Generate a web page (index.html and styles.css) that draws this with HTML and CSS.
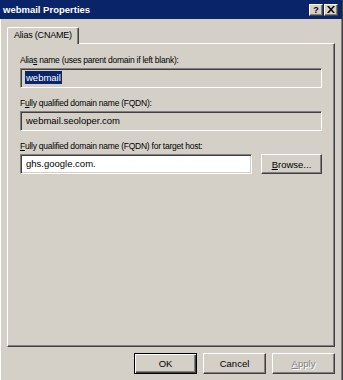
FILE: index.html
```html
<!DOCTYPE html>
<html lang="en">
<head>
    <meta charset="UTF-8">
    <title>webmail Properties</title>
    <link rel="stylesheet" href="styles.css">
</head>
<body>
    <div class="window">
        <div class="titlebar">
            <span class="title">webmail Properties</span>
            <div class="caption-buttons">
                <span class="cap-btn help">?</span>
                <span class="cap-btn">
                    <svg width="8" height="7" viewBox="0 0 8 7">
                        <path d="M0 0h2l2 2.5L6 0h2L5 3.5 8 7H6L4 4.5 2 7H0l3-3.5z" fill="#000"/>
                    </svg>
                </span>
            </div>
        </div>

        <div class="dialog-body">
            <div class="tabs">
                <div class="tab active">Alias (CNAME)</div>
            </div>

            <div class="panel">
                <div class="field">
                    <label>Alia<u>s</u> name (uses parent domain if left blank):</label>
                    <div class="textbox readonly"><span class="selected">webmail</span></div>
                </div>

                <div class="field">
                    <label>F<u>u</u>lly qualified domain name (FQDN):</label>
                    <div class="textbox readonly">webmail.seoloper.com</div>
                </div>

                <div class="field">
                    <label><u>F</u>ully qualified domain name (FQDN) for target host:</label>
                    <div class="input-row">
                        <div class="textbox">ghs.google.com.</div>
                        <button type="button" class="btn browse"><u>B</u>rowse...</button>
                    </div>
                </div>
            </div>

            <div class="actions">
                <button type="button" class="btn default">OK</button>
                <button type="button" class="btn">Cancel</button>
                <button type="button" class="btn" disabled><u>A</u>pply</button>
            </div>
        </div>
    </div>
</body>
</html>
```

FILE: styles.css
```css
* {
    margin: 0;
    padding: 0;
    box-sizing: border-box;
    font-family: 'Liberation Sans', Arial, sans-serif;
}

body {
    background: #d4d0c8;
    width: 343px;
    height: 380px;
    overflow: hidden;
}

.window {
    width: 343px;
    height: 380px;
    background: #d4d0c8;
    border-right: 1px solid #404040;
    box-shadow: inset -1px 0 #808080, inset 1px 0 #ffffff;
}

.titlebar {
    height: 19px;
    background: #0a246a;
    display: flex;
    align-items: center;
    justify-content: space-between;
    padding: 0 4px 0 3px;
}

.title {
    color: #fff;
    font-weight: bold;
    font-size: 9.5px;
}

.caption-buttons {
    display: flex;
    gap: 1px;
}

.cap-btn {
    width: 14px;
    height: 12px;
    display: flex;
    align-items: center;
    justify-content: center;
    background: #d4d0c8;
    border-top: 1px solid #fff;
    border-left: 1px solid #fff;
    border-right: 1px solid #404040;
    border-bottom: 1px solid #404040;
    box-shadow: inset -1px -1px #808080;
}

.cap-btn.help {
    font-weight: bold;
    font-size: 9px;
    color: #000;
}

.dialog-body {
    padding: 8px 7px 0 7px;
}

.tabs {
    display: flex;
    position: relative;
    z-index: 1;
    margin-bottom: -1px;
}

.tab {
    height: 17px;
    padding: 0 6px;
    font-size: 9px;
    letter-spacing: -0.2px;
    line-height: 15px;
    background: #d4d0c8;
    border-top: 1px solid #fff;
    border-left: 1px solid #fff;
    border-right: 1px solid #404040;
    border-radius: 2px 2px 0 0;
    box-shadow: inset -1px 0 #808080;
}

.panel {
    height: 304px;
    padding: 10px 12px 0 12px;
    border-top: 1px solid #fff;
    border-left: 1px solid #fff;
    border-right: 1px solid #404040;
    border-bottom: 1px solid #404040;
    box-shadow: inset -1px -1px #808080;
}

.field {
    margin-bottom: 9px;
}

label {
    display: block;
    font-size: 8.5px;
    letter-spacing: -0.25px;
    line-height: 12px;
    margin-bottom: 2px;
    color: #000;
}

.textbox {
    height: 20px;
    padding: 1px 5px 0 5px;
    font-size: 9.5px;
    line-height: 16px;
    background: #fff;
    border-top: 1px solid #808080;
    border-left: 1px solid #808080;
    border-right: 1px solid #fff;
    border-bottom: 1px solid #fff;
    box-shadow: inset 1px 1px #404040, inset -1px -1px #d4d0c8;
}

.textbox.readonly {
    background: #d4d0c8;
}

.selected {
    background: #0a246a;
    color: #fff;
    padding: 1px 1px;
    margin-left: -1px;
}

.input-row {
    display: flex;
    gap: 9px;
}

.input-row .textbox {
    flex: 1;
}

.btn {
    width: 63px;
    height: 21px;
    font-size: 9.5px;
    color: #000;
    background: #d4d0c8;
    border-top: 1px solid #fff;
    border-left: 1px solid #fff;
    border-right: 1px solid #404040;
    border-bottom: 1px solid #404040;
    box-shadow: inset -1px -1px #808080;
}

.btn.browse {
    width: 61px;
    height: 20px;
}

.btn.default {
    border: 1px solid #000;
    box-shadow: inset 1px 1px #fff, inset -1px -1px #404040, inset -2px -2px #808080;
}

.btn:disabled {
    color: #808080;
    text-shadow: 1px 1px #fff;
}

.actions {
    display: flex;
    justify-content: flex-end;
    gap: 6px;
    margin-top: 6px;
}
```
